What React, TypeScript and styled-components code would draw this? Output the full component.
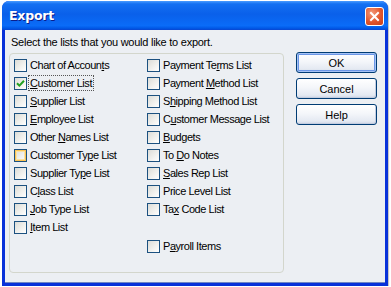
import styled, { createGlobalStyle, css } from 'styled-components';

const GlobalStyle = createGlobalStyle`
  html, body {
    margin: 0;
    padding: 0;
    background: #ffffff;
  }
  body {
    font-family: "Liberation Sans", Arial, sans-serif;
    font-size: 11px;
    color: #000000;
  }
`;

type ListItem = { label: string; key?: number; checked?: boolean; hot?: boolean; focused?: boolean };

const LEFT_LISTS: ListItem[] = [
  { label: 'Chart of Accounts', key: 15 },
  { label: 'Customer List', key: 0, checked: true, focused: true },
  { label: 'Supplier List', key: 0 },
  { label: 'Employee List', key: 0 },
  { label: 'Other Names List', key: 6 },
  { label: 'Customer Type List', key: 11, hot: true },
  { label: 'Supplier Type List', key: 11 },
  { label: 'Class List', key: 1 },
  { label: 'Job Type List', key: 0 },
  { label: 'Item List', key: 0 },
];

const RIGHT_LISTS: (ListItem | null)[] = [
  { label: 'Payment Terms List', key: 10 },
  { label: 'Payment Method List', key: 8 },
  { label: 'Shipping Method List', key: 1 },
  { label: 'Customer Message List', key: 1 },
  { label: 'Budgets', key: 0 },
  { label: 'To Do Notes', key: 3 },
  { label: 'Sales Rep List', key: 0 },
  { label: 'Price Level List' },
  { label: 'Tax Code List', key: 2 },
  null,
  { label: 'Payroll Items', key: 1 },
];

const Window = styled.div`
  display: flex;
  flex-direction: column;
  width: 386px;
  height: 285px;
  margin: 1px 0 0 2px;
  box-sizing: border-box;
  background: #0831d9;
  border-radius: 7px 7px 0 0;
  overflow: hidden;
  box-shadow: 1px 1px 1px rgba(0, 0, 0, 0.25);
`;

const TitleBar = styled.div`
  display: flex;
  align-items: center;
  justify-content: space-between;
  height: 29px;
  padding: 0 4px 0 7px;
  flex-shrink: 0;
  background: linear-gradient(
    #4a9cff 0%,
    #1470f2 10%,
    #0a60ea 45%,
    #0a6cf8 85%,
    #0058e6 94%,
    #0a45d0 100%
  );
`;

const Title = styled.span`
  font-family: "DejaVu Sans", "Liberation Sans", sans-serif;
  font-size: 12.5px;
  font-weight: bold;
  color: #ffffff;
  text-shadow: 1px 1px 0 #0a1e8c;
  letter-spacing: -0.2px;
`;

const CloseButton = styled.div`
  display: flex;
  align-items: center;
  justify-content: center;
  width: 19px;
  height: 19px;
  box-sizing: border-box;
  border: 1px solid #ffffff;
  border-radius: 3px;
  background: radial-gradient(circle at 35% 30%, #f39a7a 0%, #e2552c 55%, #c8401a 100%);
  margin-top: 1px;
`;

const Client = styled.div`
  flex: 1;
  display: flex;
  flex-direction: column;
  margin: 0 3px 3px 3px;
  padding: 4px 6px 0 4px;
  background: #eceff3;
  border-bottom: 1px solid #6f86c4;
`;

const Prompt = styled.div`
  padding-left: 2px;
  height: 16px;
  line-height: 16px;
  font-size: 11px;
  letter-spacing: -0.25px;
`;

const Body = styled.div`
  display: flex;
  align-items: flex-start;
  margin-top: 3px;
`;

const GroupBox = styled.div`
  display: grid;
  grid-template-columns: 133px 1fr;
  width: 275px;
  height: 220px;
  box-sizing: border-box;
  padding: 2px 0 0 4px;
  border: 1px solid #d3d6cc;
  border-radius: 4px;
`;

const Column = styled.div`
  display: flex;
  flex-direction: column;
`;

const Row = styled.div`
  display: flex;
  align-items: center;
  height: 18px;
`;

const Spacer = styled.div`
  height: 19px;
`;

const Box = styled.span<{ $hot?: boolean }>`
  display: inline-flex;
  align-items: center;
  justify-content: center;
  width: 13px;
  height: 13px;
  box-sizing: border-box;
  border: 1px solid #1c5180;
  background: linear-gradient(135deg, #dcdcd7 0%, #f2f2ef 60%, #ffffff 100%);
  flex-shrink: 0;
  ${(p) =>
    p.$hot &&
    css`
      box-shadow: inset 0 0 0 1px #fcc556, inset 0 0 0 2px #fbe3a4;
    `}
`;

const Label = styled.span<{ $focused?: boolean }>`
  margin-left: 1px;
  padding: 0 1px;
  line-height: 14px;
  letter-spacing: -0.45px;
  white-space: nowrap;
  border: 1px dotted ${(p) => (p.$focused ? '#555555' : 'transparent')};
`;

const AccessKey = styled.span`
  text-decoration: underline;
`;

const ButtonColumn = styled.div`
  display: flex;
  flex-direction: column;
  gap: 5px;
  margin-left: 12px;
  margin-top: -1px;
`;

const Button = styled.button<{ $default?: boolean }>`
  width: 81px;
  height: 21px;
  padding: 0;
  font-family: "Liberation Sans", Arial, sans-serif;
  font-size: 11px;
  color: #000000;
  border: 1px solid #003c74;
  border-radius: 3px;
  background: linear-gradient(#ffffff 0%, #f4f6fa 45%, #e4e9f2 85%, #cdd5e4 100%);
  box-shadow: ${(p) =>
    p.$default
      ? 'inset 0 0 0 1px #a6c3f5, inset 0 0 0 2px #6b96e6'
      : 'inset -1px -1px 0 #c4cde0'};
`;

function CheckLabel({ item }: { item: ListItem }) {
  const { label, key } = item;
  const content =
    key === undefined ? (
      label
    ) : (
      <>
        {label.slice(0, key)}
        <AccessKey>{label[key]}</AccessKey>
        {label.slice(key + 1)}
      </>
    );
  return <Label $focused={item.focused}>{content}</Label>;
}

function ListRow({ item }: { item: ListItem }) {
  return (
    <Row>
      <Box $hot={item.hot}>
        {item.checked && (
          <svg width="9" height="9" viewBox="0 0 9 9">
            <path d="M1 4.2 L3.4 6.6 L8 1.8" stroke="#21a121" strokeWidth="2" fill="none" />
          </svg>
        )}
      </Box>
      <CheckLabel item={item} />
    </Row>
  );
}

export default function App() {
  return (
    <>
      <GlobalStyle />
      <Window>
        <TitleBar>
          <Title>Export</Title>
          <CloseButton>
            <svg width="11" height="11" viewBox="0 0 11 11">
              <path d="M2 2 L9 9 M9 2 L2 9" stroke="#ffffff" strokeWidth="2" strokeLinecap="square" />
            </svg>
          </CloseButton>
        </TitleBar>
        <Client>
          <Prompt>Select the lists that you would like to export.</Prompt>
          <Body>
            <GroupBox>
              <Column>
                {LEFT_LISTS.map((item) => (
                  <ListRow key={item.label} item={item} />
                ))}
              </Column>
              <Column>
                {RIGHT_LISTS.map((item, i) =>
                  item ? <ListRow key={item.label} item={item} /> : <Spacer key={i} />
                )}
              </Column>
            </GroupBox>
            <ButtonColumn>
              <Button $default>OK</Button>
              <Button>Cancel</Button>
              <Button>Help</Button>
            </ButtonColumn>
          </Body>
        </Client>
      </Window>
    </>
  );
}
